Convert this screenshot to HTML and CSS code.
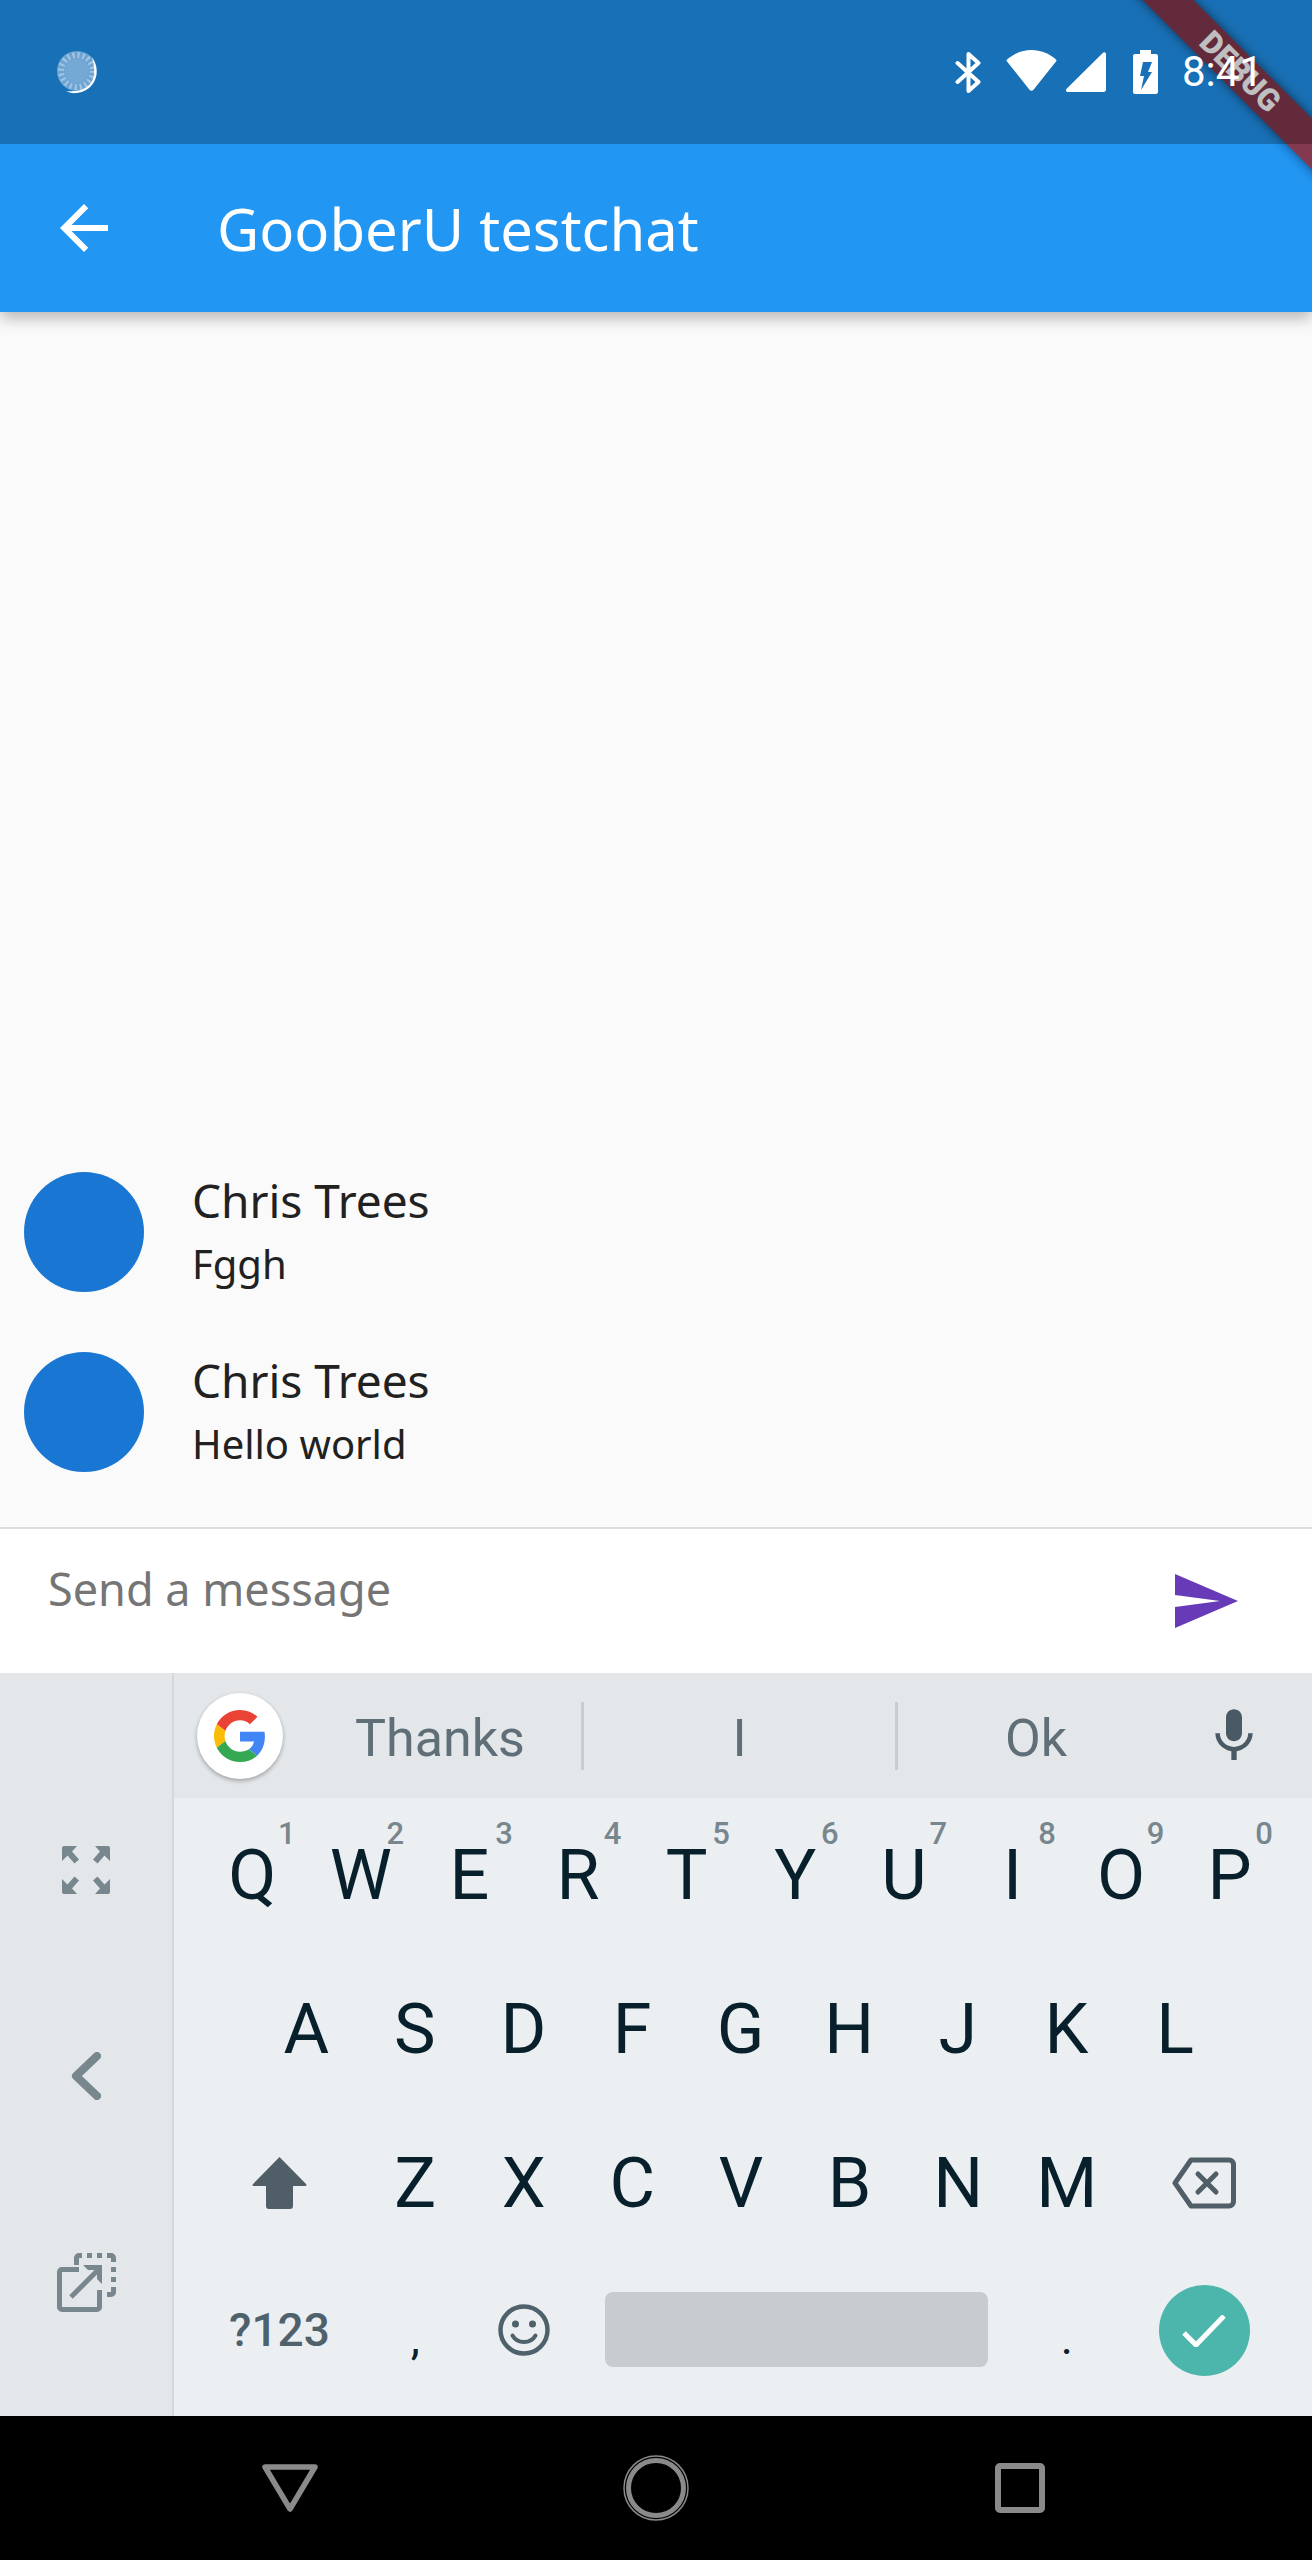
FILE: index.html
```html
<!DOCTYPE html>
<html lang="en">
<head>
  <meta charset="UTF-8" />
  <title>GooberU testchat</title>
  <link rel="stylesheet" href="styles.css">
</head>
<body>
  <div class="screen">
    <header class="header">
      <div class="status">
        <svg class="notif" viewBox="0 0 44 44">
          <circle cx="21" cy="21" r="20" fill="#6ea4d2"/>
          <circle cx="21" cy="21" r="16" fill="none" stroke="#a4c6e4" stroke-width="6" stroke-dasharray="2 3.030"/>
          <circle cx="21" cy="21" r="12" fill="#75a9d5"/>
          <path d="M36 7c9 13 5 33-15 36-5 .5-8-.5-11-2 13 1.500 26-2.500 28-16 .7-6-.4-12-2-18z" fill="#fff"/>
        </svg>
        <div class="status-right">
          <svg class="st-bt" viewBox="0 0 27 41"><path d="M2.500 11 23.500 30 13.500 39V2l10 9L2.500 30" fill="none" stroke="#fff" stroke-width="4" stroke-linejoin="round" stroke-linecap="round"/></svg>
          <svg class="st-wifi" viewBox="0 0 51 41"><path d="M1 9.500C8 3.500 16 0 25.500 0S43 3.500 50 9.500c.6.600.6 1.300.2 1.800L27.500 39.800c-1 1.300-3 1.300-4 0L.8 11.300c-.4-.5-.4-1.200.2-1.800z" fill="#fff"/></svg>
          <svg class="st-signal" viewBox="0 0 40 40"><path d="M37 .8c1.300-1.200 3-.4 3 1.200v35.500c0 1.400-1 2.500-2.500 2.500H2c-1.800 0-2.600-2-1.400-3.200z" fill="#fff"/></svg>
          <svg class="st-batt" viewBox="0 0 25 44"><path d="M7 0h11v4h5c1.100 0 2 .9 2 2v36c0 1.100-.9 2-2 2H2c-1.100 0-2-.9-2-2V6c0-1.100.9-2 2-2h5z" fill="#fff"/><path d="M10 12h9l-4 10h4l-11 18 3-14H7z" fill="#1a71b9"/></svg>
          <span class="time">8:41</span>
        </div>
      </div>
      <div class="toolbar">
        <svg class="back" viewBox="0 0 24 24"><path d="M20 11H7.830l5.590-5.590L12 4l-8 8 8 8 1.410-1.410L7.830 13H20v-2z" fill="#fff"/></svg>
        <h1 class="title">GooberU testchat</h1>
      </div>
      <div class="banner">DEBUG</div>
    </header>

    <main class="messages">
      <div class="msg">
        <div class="avatar"></div>
        <div class="msg-text">
          <div class="msg-name">Chris Trees</div>
          <div class="msg-body">Fggh</div>
        </div>
      </div>
      <div class="msg">
        <div class="avatar"></div>
        <div class="msg-text">
          <div class="msg-name">Chris Trees</div>
          <div class="msg-body">Hello world</div>
        </div>
      </div>
    </main>

    <div class="composer">
      <span class="placeholder">Send a message</span>
      <svg class="send" viewBox="0 0 24 24"><path d="M2.010 21 23 12 2.010 3 2 10l15 2-15 2z" fill="#673ab7"/></svg>
    </div>

    <section class="keyboard">
      <aside class="side">
        <svg class="side-full" viewBox="0 0 48 48"><path d="M0 2q0-2 2-2h13l-5 5.500 7 8-4.500 4-7-8L0 15zM48 2q0-2-2-2H33l5 5.500-7 8 4.500 4 7-8L48 15zM0 46q0 2 2 2h13l-5-5.500 7-8-4.500-4-7 8L0 33zM48 46q0 2-2 2H33l5-5.500-7-8 4.500-4 7 8L48 33z" fill="#78868e"/></svg>
        <svg class="side-chev" viewBox="0 0 30 48"><path d="M26 4 5 24l21 20" fill="none" stroke="#78868e" stroke-width="8" stroke-linecap="round" stroke-linejoin="round"/></svg>
        <svg class="side-float" viewBox="0 0 59 59">
          <g fill="none" stroke="#78868e" stroke-width="5">
            <path d="M22 16.500H5a2.500 2.500 0 0 0-2.500 2.500v35A2.500 2.500 0 0 0 5 56.500h35a2.500 2.500 0 0 0 2.500-2.500V37"/>
            <path d="M14 44 43 15"/>
            <path d="M19.500 12V5A2.500 2.500 0 0 1 22 2.500h3M30 2.500h5M40 2.500h5M50 2.500h4A2.500 2.500 0 0 1 56.500 5v4M56.500 14v5M56.500 24v5M56.500 34v5a2.500 2.500 0 0 1-2.500 2.500h-4"/>
          </g>
          <path d="M26 12h19v19l-5-5V17H31z" fill="#78868e"/>
        </svg>
      </aside>
      <div class="keys">
        <div class="suggest">
          <div class="g-badge">
            <svg class="g-logo" viewBox="0 0 48 48">
              <path fill="#EA4335" d="M24 9.500c3.540 0 6.710 1.220 9.210 3.600l6.850-6.850C35.900 2.380 30.470 0 24 0 14.620 0 6.510 5.380 2.560 13.220l7.980 6.190C12.430 13.720 17.740 9.500 24 9.500z"/>
              <path fill="#4285F4" d="M46.980 24.550c0-1.570-.15-3.090-.38-4.550H24v9.020h12.940c-.58 2.960-2.260 5.480-4.780 7.180l7.730 6c4.510-4.180 7.090-10.360 7.090-17.650z"/>
              <path fill="#FBBC05" d="M10.530 28.590c-.5-1.450-.78-2.990-.78-4.590s.27-3.140.78-4.590l-7.980-6.190C.92 16.460 0 20.120 0 24c0 3.880.92 7.540 2.560 10.780l7.970-6.190z"/>
              <path fill="#34A853" d="M24 48c6.480 0 11.930-2.130 15.890-5.810l-7.730-6c-2.150 1.450-4.920 2.300-8.160 2.300-6.260 0-11.570-4.220-13.470-9.910l-7.980 6.190C6.510 42.620 14.620 48 24 48z"/>
            </svg>
          </div>
          <span class="word word-1">Thanks</span>
          <span class="word word-2">I</span>
          <span class="word word-3">Ok</span>
          <svg class="mic" viewBox="0 0 24 24"><path d="M12 14c1.660 0 2.990-1.340 2.990-3L15 5c0-1.660-1.340-3-3-3S9 3.340 9 5v6c0 1.660 1.340 3 3 3zm5.300-3c0 3-2.540 5.100-5.300 5.100S6.700 14 6.700 11H5c0 3.410 2.720 6.230 6 6.720V21h2v-3.280c3.280-.48 6-3.300 6-6.720h-1.700z" fill="#4a5a64"/></svg>
        </div>

        <div class="row">
          <div class="key">Q<span class="hint">1</span></div>
          <div class="key">W<span class="hint">2</span></div>
          <div class="key">E<span class="hint">3</span></div>
          <div class="key">R<span class="hint">4</span></div>
          <div class="key">T<span class="hint">5</span></div>
          <div class="key">Y<span class="hint">6</span></div>
          <div class="key">U<span class="hint">7</span></div>
          <div class="key">I<span class="hint">8</span></div>
          <div class="key">O<span class="hint">9</span></div>
          <div class="key">P<span class="hint">0</span></div>
        </div>
        <div class="row row-home">
          <div class="key">A</div>
          <div class="key">S</div>
          <div class="key">D</div>
          <div class="key">F</div>
          <div class="key">G</div>
          <div class="key">H</div>
          <div class="key">J</div>
          <div class="key">K</div>
          <div class="key">L</div>
        </div>
        <div class="row">
          <div class="key key-wide">
            <svg class="shift" viewBox="0 0 55 52"><path d="M27.500 0 54 27q1.500 2-1 2H41v20q0 3-3 3H17q-3 0-3-3V29H2q-2.500 0-1-2z" fill="#4f5e67"/></svg>
          </div>
          <div class="key">Z</div>
          <div class="key">X</div>
          <div class="key">C</div>
          <div class="key">V</div>
          <div class="key">B</div>
          <div class="key">N</div>
          <div class="key">M</div>
          <div class="key key-wide">
            <svg class="bksp" viewBox="0 0 64 52"><path d="M19 3h38a4.500 4.500 0 0 1 4.500 4.500v37a4.500 4.500 0 0 1-4.500 4.500H19L3 26z" fill="none" stroke="#4f5e67" stroke-width="5" stroke-linejoin="round"/><path d="M26 17l18 18M44 17 26 35" fill="none" stroke="#4f5e67" stroke-width="5" stroke-linecap="round"/></svg>
          </div>
        </div>
        <div class="row row-last">
          <div class="key key-wide key-sym">?123</div>
          <div class="key key-punct">,</div>
          <div class="key">
            <svg class="smile" viewBox="0 0 52 52"><circle cx="26" cy="26" r="23.500" fill="none" stroke="#4f616b" stroke-width="4.500"/><circle cx="17.500" cy="20" r="3.500" fill="#4f616b"/><circle cx="34.500" cy="20" r="3.500" fill="#4f616b"/><path d="M14.500 31.500c2.500 4.500 6.500 6.500 11.500 6.500s9-2 11.500-6.500" fill="none" stroke="#4f616b" stroke-width="4" stroke-linecap="round"/></svg>
          </div>
          <div class="key key-space"><div class="spacebar"></div></div>
          <div class="key key-punct">.</div>
          <div class="key key-wide">
            <div class="enter">
              <svg class="check" viewBox="0 0 44 32"><path d="M2 18 14 30 42 1" fill="none" stroke="#fff" stroke-width="5"/></svg>
            </div>
          </div>
        </div>
      </div>
    </section>

    <nav class="navbar">
      <svg class="nav-back" viewBox="0 0 56 48"><path d="M3 3h50L28 45z" fill="none" stroke="#8a8a8a" stroke-width="5.500" stroke-linejoin="round"/></svg>
      <svg class="nav-home" viewBox="0 0 66 66"><circle cx="33" cy="33" r="32" fill="none" stroke="#8a8a8a" stroke-width="1.500"/><circle cx="33" cy="33" r="27.500" fill="none" stroke="#8a8a8a" stroke-width="5"/></svg>
      <svg class="nav-recent" viewBox="0 0 50 50"><rect x="3" y="3" width="44" height="44" rx="2" fill="none" stroke="#8a8a8a" stroke-width="6"/></svg>
    </nav>
  </div>
</body>
</html>
```

FILE: styles.css
```css
* {
  box-sizing: border-box;
}

html, body {
  margin: 0;
  padding: 0;
}

body {
  font-family: "Noto Sans", sans-serif;
  background-color: #fafafa;
}

svg {
  display: block;
}

.screen {
  width: 1312px;
  height: 2560px;
  display: flex;
  flex-direction: column;
  overflow: hidden;
  position: relative;
}

/* App bar runs under the status bar scrim */
.header {
  position: relative;
  height: 312px;
  flex: none;
  background-color: #2196f3;
  box-shadow: 0 6px 15px rgba(0,0,0,0.28);
  z-index: 3;
}

.status {
  position: relative;
  z-index: 2;
  height: 144px;
  padding-left: 56px;
  display: flex;
  align-items: center;
  justify-content: space-between;
  background-color: rgba(0,0,0,0.25);
}

.notif {
  width: 44px;
  height: 44px;
}

.status-right {
  display: flex;
  align-items: center;
  width: 357px;
  height: 44px;
}

.st-bt {
  width: 27px;
  height: 41px;
}

.st-wifi {
  width: 51px;
  height: 41px;
  margin-left: 24px;
  margin-top: -3px;
}

.st-signal {
  width: 40px;
  height: 40px;
  margin-left: 9px;
}

.st-batt {
  width: 25px;
  height: 44px;
  margin-left: 27px;
}

.time {
  font-family: Roboto, sans-serif;
  font-size: 42px;
  line-height: 44px;
  color: #fff;
  margin-left: 24px;
}

.toolbar {
  height: 168px;
  display: flex;
  align-items: center;
  padding-left: 48px;
}

.back {
  width: 72px;
  height: 72px;
}

.title {
  margin: 0 0 0 97px;
  font-size: 58px;
  font-weight: 400;
  color: #fff;
}

/* Debug ribbon in the top corner */
.banner {
  position: absolute;
  z-index: 1;
  left: 1040px;
  top: 54px;
  width: 400px;
  height: 36px;
  transform: rotate(45deg);
  background-color: #83394f;
  box-shadow: 0 0 12px rgba(0,0,0,0.5);
  color: #fff;
  font-family: Roboto, sans-serif;
  font-weight: 900;
  font-size: 31px;
  line-height: 36px;
  text-align: center;
}

.messages {
  flex: 1;
  display: flex;
  flex-direction: column;
  justify-content: flex-end;
  gap: 60px;
  padding: 0 0 55px 24px;
}

.msg {
  display: flex;
  align-items: center;
  height: 120px;
}

.avatar {
  width: 120px;
  height: 120px;
  border-radius: 50%;
  background-color: #1976d2;
  flex: none;
}

.msg-text {
  margin-left: 48px;
  color: #212121;
}

.msg-name {
  font-size: 46px;
  line-height: 63px;
}

.msg-body {
  font-size: 40px;
  line-height: 63px;
}

.composer {
  height: 146px;
  flex: none;
  background-color: #fff;
  border-top: 2px solid #dedede;
  padding-left: 48px;
  display: flex;
  justify-content: space-between;
}

.placeholder {
  font-size: 45px;
  line-height: 60px;
  margin-top: 30px;
  color: #757575;
}

.send {
  width: 72px;
  height: 72px;
  margin: 36px 71px 0 0;
}

.keyboard {
  height: 743px;
  flex: none;
  display: flex;
  background-color: #eceff2;
}

.side {
  width: 174px;
  flex: none;
  background-color: #e3e7ea;
  border-right: 2px solid #d3d8dc;
  display: flex;
  flex-direction: column;
  align-items: center;
  padding-top: 173px;
}

.side-full {
  width: 48px;
  height: 48px;
}

.side-chev {
  width: 30px;
  height: 48px;
  margin-top: 158px;
}

.side-float {
  width: 59px;
  height: 59px;
  margin-top: 153px;
}

.keys {
  flex: 1;
  display: flex;
  flex-direction: column;
}

.suggest {
  height: 125px;
  flex: none;
  background-color: #e3e7ea;
  display: flex;
  align-items: center;
  padding-left: 23px;
}

.g-badge {
  width: 86px;
  height: 86px;
  border-radius: 50%;
  background-color: #fff;
  box-shadow: 0 2px 4px rgba(0,0,0,0.3);
  display: flex;
  align-items: center;
  justify-content: center;
  flex: none;
}

.g-logo {
  width: 52px;
  height: 52px;
}

.word {
  font-family: Roboto, sans-serif;
  font-size: 52px;
  color: #5f6e77;
  text-align: center;
  height: 68px;
  line-height: 74px;
  flex: none;
}

.word-1 {
  width: 301px;
  padding-left: 16px;
  border-right: 3px solid #c6cdd1;
}

.word-2 {
  width: 314px;
  border-right: 3px solid #c6cdd1;
}

.word-3 {
  width: 276px;
}

.mic {
  width: 64px;
  height: 64px;
  margin-left: 28px;
}

.row {
  height: 154px;
  flex: none;
  display: flex;
  align-items: center;
  padding-left: 24px;
}

.row-home {
  padding-left: 78px;
}

.row-last {
  height: 155px;
  padding-bottom: 16px;
}

.key {
  width: 108.6px;
  height: 100%;
  flex: none;
  position: relative;
  display: flex;
  align-items: center;
  justify-content: center;
  font-family: Roboto, sans-serif;
  font-size: 70px;
  color: #07202c;
}

.key-wide {
  width: 162.9px;
}

.key-sym {
  font-size: 46px;
  font-weight: 500;
  color: #4f616b;
}

.key-punct {
  font-size: 46px;
  padding-top: 16px;
}

.key-space {
  width: 434.4px;
  padding: 0 24px 0 27px;
}

.hint {
  position: absolute;
  top: 21px;
  right: 11px;
  font-size: 31px;
  line-height: 30px;
  font-weight: 500;
  color: #78868e;
}

.shift {
  width: 55px;
  height: 52px;
}

.bksp {
  width: 64px;
  height: 52px;
  margin-left: 3px;
}

.smile {
  width: 52px;
  height: 52px;
}

.spacebar {
  width: 100%;
  height: 75px;
  border-radius: 8px;
  background-color: #c7cccf;
}

.enter {
  width: 91px;
  height: 91px;
  margin: 2px 0 0 3px;
  border-radius: 50%;
  background-color: #4db6ac;
  display: flex;
  align-items: center;
  justify-content: center;
}

.check {
  width: 44px;
  height: 32px;
}

.navbar {
  height: 144px;
  flex: none;
  background-color: #000;
  display: flex;
  align-items: center;
  padding-left: 262px;
}

.nav-back {
  width: 56px;
  height: 48px;
}

.nav-home {
  width: 66px;
  height: 66px;
  margin-left: 305px;
}

.nav-recent {
  width: 50px;
  height: 50px;
  margin-left: 306px;
}
```
